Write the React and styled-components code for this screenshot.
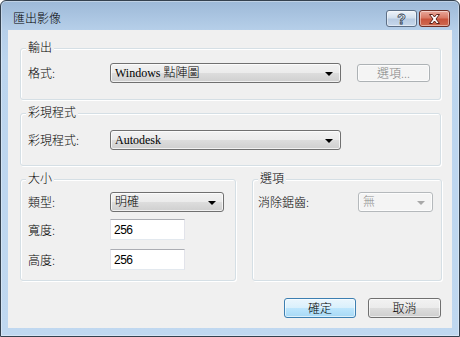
import styled, { createGlobalStyle } from "styled-components";

const GlobalStyle = createGlobalStyle`
  html, body {
    margin: 0;
    padding: 0;
    background: #fff;
  }
  body {
    width: 460px;
    height: 337px;
    overflow: hidden;
    font-family: "Noto Sans CJK TC", "Liberation Sans", sans-serif;
    font-weight: 300;
    font-size: 12px;
    color: #000;
  }
`;

const UI_FONT = `"Liberation Serif", "Noto Sans CJK TC", serif`;

const Combo = ({ value, width, disabled }) => (
  <ComboBox $width={width} $disabled={disabled}>
    <ComboText>{value}</ComboText>
    <Arrow $disabled={disabled} />
  </ComboBox>
);

const Group = ({ title, children, ...rest }) => (
  <GroupBox {...rest}>
    <Legend>{title}</Legend>
    {children}
  </GroupBox>
);

const App = () => (
  <>
    <GlobalStyle />
    <Window>
      <TitleBar>
        <Title>匯出影像</Title>
        <Captions>
          <CaptionButton $variant="help">
            <HelpGlyph>?</HelpGlyph>
          </CaptionButton>
          <CaptionButton $variant="close">
            <svg width="13" height="10" viewBox="0 0 13 10">
              <path
                d="M1.5 0.5 H4.5 L6.5 3 L8.5 0.5 H11.5 L8 5 L11.5 9.5 H8.5 L6.5 7 L4.5 9.5 H1.5 L5 5 Z"
                fill="#fff"
                stroke="#5a2018"
                strokeWidth="1"
                strokeLinejoin="round"
              />
            </svg>
          </CaptionButton>
        </Captions>
      </TitleBar>

      <Client>
        <Group title="輸出" $pt={14} $pb={16}>
          <Row>
            <Label $w={82}>格式:</Label>
            <Combo value="Windows 點陣圖" width={231} />
            <Button $variant="disabled" $w={73} $h={18} $ml={16}>
              選項...
            </Button>
          </Row>
        </Group>

        <Group title="彩現程式" $pt={16} $pb={15} $mt={13}>
          <Row>
            <Label $w={82}>彩現程式:</Label>
            <Combo value="Autodesk" width={231} />
          </Row>
        </Group>

        <Columns>
          <Group title="大小" $pt={12} $pb={10} $w={216}>
            <Row>
              <Label $w={82}>類型:</Label>
              <Combo value="明確" width={114} />
            </Row>
            <Row $mt={7}>
              <Label $w={82}>寬度:</Label>
              <TextBox readOnly value="256" />
            </Row>
            <Row $mt={9}>
              <Label $w={82}>高度:</Label>
              <TextBox readOnly value="256" />
            </Row>
          </Group>

          <Group title="選項" $pt={12} $pb={10} $pl={5} $grow>
            <Row>
              <Label $w={100}>消除鋸齒:</Label>
              <Combo value="無" width={75} disabled />
            </Row>
          </Group>
        </Columns>

        <Footer>
          <Button $variant="default" $w={72} $h={20}>
            確定
          </Button>
          <Button $w={73} $h={20}>
            取消
          </Button>
        </Footer>
      </Client>
    </Window>
  </>
);

export default App;

const Window = styled.div`
  box-sizing: border-box;
  width: 460px;
  height: 337px;
  display: flex;
  flex-direction: column;
  border: 1px solid #34414f;
  border-radius: 6px 6px 0 0;
  background: linear-gradient(180deg, #9db9d8 0px, #b6cfe9 29px, #bcd5ee 60px, #c0d8f0 100%);
  box-shadow: inset 0 0 0 1px rgba(255, 255, 255, 0.35);
`;

const TitleBar = styled.div`
  height: 29px;
  flex: none;
  display: flex;
  align-items: flex-start;
  justify-content: space-between;
  padding: 0 9px 0 12px;
`;

const Title = styled.span`
  margin-top: 10px;
  font-size: 12px;
  line-height: 14px;
  color: #000;
`;

const Captions = styled.div`
  display: flex;
  gap: 2px;
  margin-top: 9px;
`;

const CaptionButton = styled.div`
  box-sizing: border-box;
  width: 31px;
  height: 17px;
  border-radius: 3px;
  display: flex;
  align-items: center;
  justify-content: center;
  border: 1px solid ${({ $variant }) => ($variant === "close" ? "#6e2e25" : "#5d6f86")};
  background: ${({ $variant }) =>
    $variant === "close"
      ? "linear-gradient(180deg, #e9a89b 0%, #d97a66 45%, #c9533c 55%, #cf6a50 100%)"
      : "linear-gradient(180deg, #eef3f9 0%, #d3e0ee 45%, #b8cbe2 55%, #c7d8ec 100%)"};
  box-shadow: inset 0 0 0 1px rgba(255, 255, 255, 0.45);
`;

const HelpGlyph = styled.span`
  font-family: "Liberation Sans", sans-serif;
  font-weight: 700;
  font-size: 14px;
  line-height: 14px;
  color: #fff;
  -webkit-text-stroke: 0.8px #2d3d52;
`;

const Client = styled.div`
  flex: 1;
  margin: 0 7px 8px 7px;
  background: #f0f0f0;
  padding: 18px 11px 0 12px;
  display: flex;
  flex-direction: column;
`;

const GroupBox = styled.div`
  position: relative;
  box-sizing: border-box;
  border: 1px solid #d5dfe5;
  border-radius: 3px;
  box-shadow: inset 1px 1px 0 #fff, 1px 1px 0 #fff;
  padding: ${({ $pt }) => $pt}px 8px ${({ $pb }) => $pb}px ${({ $pl }) => $pl ?? 7}px;
  margin-top: ${({ $mt }) => $mt ?? 0}px;
  width: ${({ $w }) => ($w ? `${$w}px` : "auto")};
  flex: ${({ $grow }) => ($grow ? 1 : "none")};
  display: flex;
  flex-direction: column;
`;

const Legend = styled.span`
  position: absolute;
  top: -9px;
  left: 5px;
  padding: 0 2px;
  background: #f0f0f0;
  font-size: 12px;
  line-height: 14px;
`;

const Columns = styled.div`
  display: flex;
  gap: 16px;
  margin-top: 13px;
`;

const Row = styled.div`
  display: flex;
  align-items: center;
  margin-top: ${({ $mt }) => $mt ?? 0}px;
`;

const Label = styled.span`
  width: ${({ $w }) => $w}px;
  flex: none;
  font-size: 12px;
  line-height: 14px;
`;

const ComboBox = styled.div`
  box-sizing: border-box;
  width: ${({ $width }) => $width}px;
  height: 20px;
  display: flex;
  align-items: center;
  justify-content: space-between;
  padding: 0 7px 0 4px;
  border: 1px solid ${({ $disabled }) => ($disabled ? "#b5b9bc" : "#707070")};
  border-radius: 3px;
  color: ${({ $disabled }) => ($disabled ? "#8d8d8d" : "#000")};
  background: ${({ $disabled }) =>
    $disabled
      ? "#f4f4f4"
      : "linear-gradient(180deg, #f2f2f2 0%, #ebebeb 50%, #dddddd 50%, #cfcfcf 100%)"};
  box-shadow: inset 0 0 0 1px rgba(255, 255, 255, 0.7);
`;

const ComboText = styled.span`
  font-family: ${UI_FONT};
  font-weight: 300;
  font-size: 12px;
  line-height: 14px;
  white-space: nowrap;
`;

const Arrow = styled.span`
  width: 0;
  height: 0;
  border-left: 4px solid transparent;
  border-right: 4px solid transparent;
  border-top: 4px solid ${({ $disabled }) => ($disabled ? "#a8a8a8" : "#000")};
  margin-top: 1px;
`;

const TextBox = styled.input`
  box-sizing: border-box;
  width: 75px;
  height: 21px;
  padding: 0 3px;
  margin: 0;
  border: 1px solid #e2e3ea;
  border-top-color: #abadb3;
  border-bottom-color: #e3e9ef;
  background: #fff;
  font-family: "Liberation Sans", sans-serif;
  font-size: 12px;
  letter-spacing: -0.5px;
  color: #000;
  outline: none;
`;

const Footer = styled.div`
  display: flex;
  justify-content: flex-end;
  gap: 12px;
  margin-top: 17px;
`;

const Button = styled.button`
  box-sizing: border-box;
  width: ${({ $w }) => $w}px;
  height: ${({ $h }) => $h}px;
  margin: 0 0 0 ${({ $ml }) => $ml ?? 0}px;
  padding: 0;
  border-radius: 3px;
  font-family: "Noto Sans CJK TC", sans-serif;
  font-weight: 300;
  font-size: 12px;
  line-height: 14px;
  border: 1px solid
    ${({ $variant }) =>
      $variant === "default" ? "#3c7fb1" : $variant === "disabled" ? "#adb2b5" : "#707070"};
  color: ${({ $variant }) => ($variant === "disabled" ? "#838383" : "#000")};
  background: ${({ $variant }) =>
    $variant === "default"
      ? "linear-gradient(180deg, #eaf6fd 0%, #d9f0fc 50%, #bee6fd 50%, #a7d9f5 100%)"
      : $variant === "disabled"
      ? "#f4f4f4"
      : "linear-gradient(180deg, #f2f2f2 0%, #ebebeb 50%, #dddddd 50%, #cfcfcf 100%)"};
  box-shadow: inset 0 0 0 1px rgba(255, 255, 255, 0.6);
`;
